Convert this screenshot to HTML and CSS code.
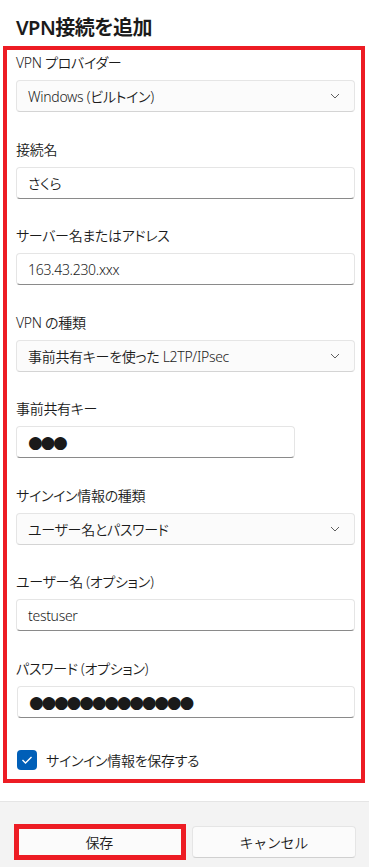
FILE: index.html
```html
<!DOCTYPE html>
<html lang="ja">
<head>
    <meta charset="UTF-8">
    <meta name="viewport" content="width=device-width, initial-scale=1.0">
    <title>VPN接続を追加</title>
    <link rel="stylesheet" href="styles.css">
</head>
<body>
  <div class="dialog">
    <h1 class="title">VPN接続を追加</h1>

    <div class="form-box">
        <div class="field">
            <label>VPN プロバイダー</label>
            <div class="select">
                <span>Windows (ビルトイン)</span>
                <svg class="chevron" width="10" height="6" viewBox="0 0 10 6"><polyline points="1,1 5,5 9,1" fill="none" stroke="#5f5f5f" stroke-width="1"/></svg>
            </div>
        </div>

        <div class="field">
            <label>接続名</label>
            <div class="input">さくら</div>
        </div>

        <div class="field">
            <label>サーバー名またはアドレス</label>
            <div class="input">163.43.230.xxx</div>
        </div>

        <div class="field">
            <label>VPN の種類</label>
            <div class="select">
                <span>事前共有キーを使った L2TP/IPsec</span>
                <svg class="chevron" width="10" height="6" viewBox="0 0 10 6"><polyline points="1,1 5,5 9,1" fill="none" stroke="#5f5f5f" stroke-width="1"/></svg>
            </div>
        </div>

        <div class="field">
            <label>事前共有キー</label>
            <div class="input input-short"><span class="dots">●●●</span></div>
        </div>

        <div class="field">
            <label>サインイン情報の種類</label>
            <div class="select">
                <span>ユーザー名とパスワード</span>
                <svg class="chevron" width="10" height="6" viewBox="0 0 10 6"><polyline points="1,1 5,5 9,1" fill="none" stroke="#5f5f5f" stroke-width="1"/></svg>
            </div>
        </div>

        <div class="field">
            <label>ユーザー名 (オプション)</label>
            <div class="input">testuser</div>
        </div>

        <div class="field field-last">
            <label>パスワード (オプション)</label>
            <div class="input input-pw"><span class="dots">●●●●●●●●●●●●●</span></div>
        </div>

        <div class="check-row">
            <span class="checkbox">
                <svg width="12" height="10" viewBox="0 0 12 10"><polyline points="1.5,5 4.5,8 10.5,2" fill="none" stroke="#fff" stroke-width="1.4"/></svg>
            </span>
            <span>サインイン情報を保存する</span>
        </div>
    </div>

    <div class="footer">
        <button class="btn btn-save">保存</button>
        <button class="btn">キャンセル</button>
    </div>
  </div>
</body>
</html>
```

FILE: styles.css
```css
body {
    margin: 0;
    padding: 0;
    background-color: #fff;
    font-family: "Noto Sans", "Noto Sans CJK JP", sans-serif;
    font-feature-settings: "palt";
    font-weight: 350;
    letter-spacing: -0.3px;
    color: #1b1b1b;
    font-size: 14px;
}
.dialog {
    display: flex;
    flex-direction: column;
    height: 867px;
}
.title {
    margin: 0;
    padding: 14px 16px 0;
    font-size: 20px;
    font-weight: 600;
    letter-spacing: -0.5px;
    line-height: 28px;
    height: 32px;
}
.form-box {
    margin: 0 4px 0 3px;
    border: 4px solid #ed1c24;
    padding: 3px 6px 9px 9px;
}
.field {
    margin-bottom: 27.5px;
}
.field-last {
    margin-bottom: 32.5px;
}
.field label {
    display: block;
    line-height: 20px;
    margin-bottom: 7px;
}
.select,
.input {
    box-sizing: border-box;
    height: 32px;
    display: flex;
    align-items: center;
    padding: 0 11px;
    border: 1px solid #e5e5e5;
    border-radius: 4px;
}
.select {
    justify-content: space-between;
    background-color: #fbfbfb;
    border-bottom-color: #d4d4d4;
    padding-right: 14px;
}
.input {
    background-color: #fff;
    border-bottom-color: #8a8a8a;
}
.input-short {
    width: 279px;
}
.input-pw {
    margin-left: 1px;
}
.dots {
    font-family: "DejaVu Sans", sans-serif;
    font-weight: 400;
    font-size: 17px;
    letter-spacing: -2.3px;
    color: #1a1a1a;
}
.check-row {
    display: flex;
    align-items: center;
    gap: 9px;
    height: 20px;
    padding-left: 1px;
}
.checkbox {
    width: 20px;
    height: 20px;
    border-radius: 4px;
    background-color: #005fb8;
    display: flex;
    align-items: center;
    justify-content: center;
}
.footer {
    margin-top: 18px;
    flex: 1;
    background-color: #f3f3f3;
    border-top: 1px solid #e5e5e5;
    padding: 24px 13px 0 17px;
    display: flex;
    align-items: flex-start;
    gap: 10px;
}
.btn {
    flex: 1;
    height: 32px;
    font-family: inherit;
    font-size: 14px;
    font-weight: 350;
    letter-spacing: -0.3px;
    color: #1b1b1b;
    background-color: #fbfbfb;
    border: 1px solid #e5e5e5;
    border-bottom-color: #d0d0d0;
    border-radius: 4px;
    position: relative;
}
.btn-save::after {
    content: "";
    position: absolute;
    top: -3px;
    bottom: -3px;
    left: -4px;
    right: -5px;
    border: 5px solid #ed1c24;
}
```
